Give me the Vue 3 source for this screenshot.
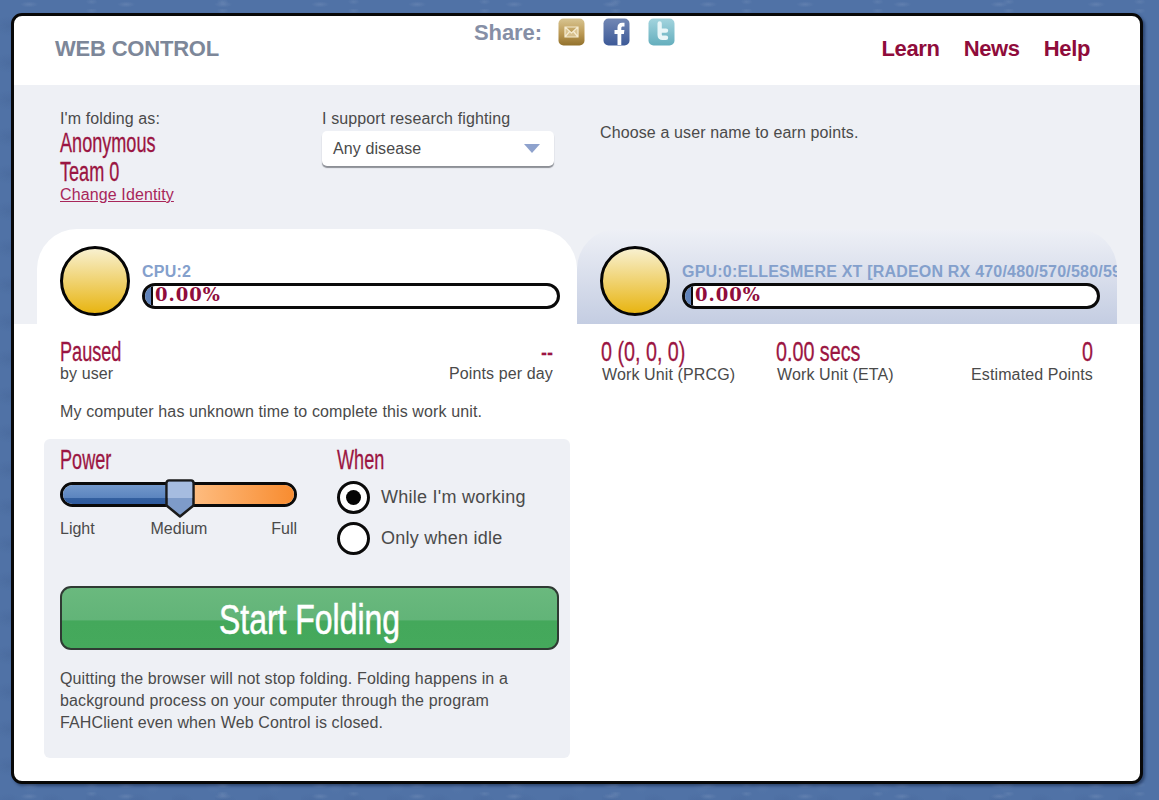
<template>
  <div class="page">
    <main class="card">
      <header class="header">
        <div class="brand">WEB CONTROL</div>
        <div class="share">
          <span class="share-label">Share:</span>
          <svg class="tile t-mail" viewBox="0 0 27 28" width="27" height="28">
            <rect x="0.5" y="0.5" width="26" height="27" rx="5" fill="url(#gold)" />
            <path d="M7 9h13v10H7zM7 9l6.5 6L20 9M7 19l4.500-5.500M20 19l-4.500-5.500" fill="#f1e4c0" fill-opacity=".55" stroke="#f5ebd0" stroke-width="1.2" />
            <defs>
              <linearGradient id="gold" x1="0" y1="0" x2="0" y2="1"><stop offset="0" stop-color="#d8c592" /><stop offset=".55" stop-color="#bc9a55" /><stop offset="1" stop-color="#92712c" /></linearGradient>
              <linearGradient id="fb" x1="0" y1="0" x2="0" y2="1"><stop offset="0" stop-color="#7287b4" /><stop offset="1" stop-color="#3d5a98" /></linearGradient>
              <linearGradient id="tw" x1="0" y1="0" x2="0" y2="1"><stop offset="0" stop-color="#a3d4de" /><stop offset="1" stop-color="#64aebd" /></linearGradient>
            </defs>
          </svg>
          <svg class="tile" viewBox="0 0 27 28" width="27" height="28">
            <rect x="0.5" y="0.5" width="26" height="27" rx="5" fill="url(#fb)" />
            <path d="M14.500 27V16h-3v-4h3V9.500c0-3.200 1.800-4.800 4.600-4.800h2.400v3.800h-1.600c-1.200 0-1.600.6-1.600 1.700V12h3.100l-.5 4h-2.600v11z" fill="#fff" />
          </svg>
          <svg class="tile" viewBox="0 0 27 28" width="27" height="28">
            <rect x="0.5" y="0.5" width="26" height="27" rx="5" fill="url(#tw)" />
            <path d="M9.500 5.500v11.500c0 3.200 2 5 5 5h3.500a2.200 2.200 0 0 0 0-4.400h-3c-.8 0-1.200-.4-1.200-1.200v-1.600H18a2.200 2.200 0 0 0 0-4.400h-4.200V5.500a2.150 2.150 0 0 0-4.300 0z" fill="#e9f6f8" />
          </svg>
        </div>
        <nav class="nav">
          <a>Learn</a>
          <a>News</a>
          <a>Help</a>
        </nav>
      </header>

      <section class="band">
        <div class="identity">
          <div class="who">
            <div class="label">I'm folding as:</div>
            <div class="cond name">Anonymous</div>
            <div class="cond name">Team 0</div>
            <a class="change">Change Identity</a>
          </div>
          <div class="cause">
            <div class="label">I support research fighting</div>
            <div class="select">
              <span>Any disease</span>
              <i class="caret"></i>
            </div>
          </div>
          <div class="hint">Choose a user name to earn points.</div>
        </div>

        <div class="tabs">
          <div v-for="tab in tabs" :key="tab.title" class="tab" :class="{ active: tab.active }">
            <div class="disc"></div>
            <div class="slot">
              <div class="slot-title">{{ tab.title }}</div>
              <div class="progress">
                <div class="fill"></div>
                <span class="pct">0.00%</span>
              </div>
            </div>
          </div>
        </div>
      </section>

      <section class="panes">
        <div class="pane-left">
          <div class="status">
            <div>
              <div class="cond stat">Paused</div>
              <div class="label">by user</div>
            </div>
            <div class="right">
              <div class="cond stat">--</div>
              <div class="label">Points per day</div>
            </div>
          </div>
          <p class="eta">My computer has unknown time to complete this work unit.</p>

          <div class="controls">
            <div class="settings">
              <div class="power">
                <div class="cond heading">Power</div>
                <div class="slider">
                  <div class="track">
                    <div class="track-low"></div>
                    <div class="track-high"></div>
                  </div>
                  <svg class="thumb" viewBox="0 0 32 41" width="32" height="41">
                    <path d="M5 2.500h22a2.500 2.500 0 0 1 2.500 2.500v22.500L16 38.500 2.500 27.500V5A2.500 2.500 0 0 1 5 2.500z" fill="#7e9bc9" stroke="#1a1a1a" stroke-width="2.500" stroke-linejoin="round" />
                    <path d="M5 3.800h22a1.200 1.200 0 0 1 1.200 1.200v15H3.800V5A1.200 1.200 0 0 1 5 3.800z" fill="#a6bce0" />
                  </svg>
                </div>
                <div class="ticks"><span>Light</span><span class="mid">Medium</span><span>Full</span></div>
              </div>
              <div class="when">
                <div class="cond heading">When</div>
                <div class="radio-row first"><span class="radio on"></span><span>While I'm working</span></div>
                <div class="radio-row"><span class="radio"></span><span>Only when idle</span></div>
              </div>
            </div>

            <button class="start"><span class="start-text">Start Folding</span></button>

            <p class="note">Quitting the browser will not stop folding. Folding happens in a<br />background process on your computer through the program<br />FAHClient even when Web Control is closed.</p>
          </div>
        </div>

        <div class="pane-right">
          <div class="wu">
            <div class="cond stat wide">0 (0, 0, 0)</div>
            <div class="label">Work Unit (PRCG)</div>
          </div>
          <div class="wu">
            <div class="cond stat wide">0.00 secs</div>
            <div class="label">Work Unit (ETA)</div>
          </div>
          <div class="wu right">
            <div class="cond stat wide">0</div>
            <div class="label">Estimated Points</div>
          </div>
        </div>
      </section>
    </main>
  </div>
</template>

<script setup>
const tabs = [
  { title: 'CPU:2', active: true },
  { title: 'GPU:0:ELLESMERE XT [RADEON RX 470/480/570/580/590]', active: false }
]
</script>

<style>
html, body { margin: 0; }
</style>

<style scoped>
.page {
  box-sizing: border-box;
  width: 1159px;
  height: 800px;
  padding: 13px 16px 16px 11px;
  overflow: hidden;
  background-color: #5072a6;
  background-image:
    radial-gradient(ellipse 9px 3px at 30% 40%, rgba(140, 162, 198, .28), transparent),
    radial-gradient(ellipse 6px 3px at 70% 20%, rgba(140, 162, 198, .22), transparent),
    radial-gradient(ellipse 10px 14px at 50% 60%, rgba(125, 150, 190, .18), transparent),
    radial-gradient(ellipse 14px 10px at 20% 70%, rgba(60, 90, 140, .22), transparent);
  background-size: 97px 11px, 131px 9px, 61px 47px, 43px 37px;
  font-family: "Liberation Sans", Arial, sans-serif;
  color: #4a4a4a;
}
.card {
  box-sizing: border-box;
  height: 771px;
  display: flex;
  flex-direction: column;
  background: #fff;
  border: 3px solid #080808;
  border-radius: 11px;
  overflow: hidden;
  box-shadow: 2px 2px 3px rgba(10, 25, 60, .5);
}
.header {
  height: 69px;
  flex: none;
  position: relative;
  display: flex;
  align-items: flex-start;
  justify-content: space-between;
  padding: 0 50px 0 41px;
}
.brand {
  margin-top: 20px;
  font-size: 22px;
  line-height: 26px;
  font-weight: 700;
  color: #7d8799;
  letter-spacing: -.2px;
}
.share {
  position: absolute;
  left: 460px;
  top: 2px;
  display: flex;
  align-items: flex-start;
}
.share-label {
  font-size: 22px;
  line-height: 26px;
  margin-top: 2px;
  font-weight: 700;
  color: #868fa6;
  letter-spacing: -.1px;
  width: 84px;
}
.tile { display: block; margin-right: 18px; }
.nav {
  display: flex;
  gap: 24px;
  margin-top: 20px;
  font-size: 22px;
  line-height: 26px;
  font-weight: 700;
  letter-spacing: -.35px;
  color: #8f0c3b;
}
.band {
  height: 239px;
  flex: none;
  background: #eef0f5;
  display: flex;
  flex-direction: column;
  justify-content: space-between;
}
.identity {
  height: 144px;
  position: relative;
  display: flex;
  padding: 24px 0 0 46px;
  box-sizing: border-box;
}
.label {
  font-size: 16px;
  line-height: 20px;
  letter-spacing: .12px;
  color: #4a4a4a;
  white-space: nowrap;
}
.cond {
  font-family: "Liberation Sans", sans-serif;
  color: #9b1542;
  display: block;
  transform-origin: left center;
  transform: scaleX(.67);
  -webkit-text-stroke: .3px #9b1542;
  white-space: nowrap;
}
.cond.wide { transform: scaleX(.73); }
.who { width: 262px; }
.name { font-size: 27px; line-height: 29px; }
.change {
  display: block;
  font-size: 16px;
  line-height: 16px;
  letter-spacing: .12px;
  color: #a8265a;
  text-decoration: underline;
}
.cause { width: 278px; }
.select {
  box-sizing: border-box;
  width: 232px;
  height: 35px;
  margin-top: 2px;
  padding: 0 14px 0 11px;
  display: flex;
  align-items: center;
  justify-content: space-between;
  font-size: 16px;
  letter-spacing: .1px;
  color: #4a4a4a;
  background: #fff;
  border-radius: 5px;
  box-shadow: 0 2px 1px #8c8f96;
}
.caret {
  width: 0;
  height: 0;
  border-left: 8px solid transparent;
  border-right: 8px solid transparent;
  border-top: 9px solid #8ea2cd;
}
.hint { font-size: 16px; line-height: 20px; letter-spacing: .12px; margin-top: 14px; white-space: nowrap; }
.tabs {
  display: flex;
  height: 95px;
  padding-left: 23px;
}
.tab {
  box-sizing: border-box;
  width: 540px;
  padding: 17px 17px 0 23px;
  display: flex;
  border-radius: 40px 40px 0 0;
  background: linear-gradient(#eef0f6, #c4cde2);
  overflow: hidden;
}
.tab.active { background: #fff; }
.disc {
  box-sizing: border-box;
  flex: none;
  width: 70px;
  height: 70px;
  border: 3px solid #050505;
  border-radius: 50%;
  background: linear-gradient(#f8f0cf, #e8b512);
}
.slot { margin-left: 12px; flex: none; width: 418px; margin-top: 16px; }
.slot-title {
  width: 436px;
  font-size: 16px;
  line-height: 19px;
  font-weight: 700;
  letter-spacing: .2px;
  color: #84a0cc;
  white-space: nowrap;
  overflow: hidden;
}
.progress {
  box-sizing: border-box;
  position: relative;
  height: 26px;
  margin-top: 2px;
  border: 3px solid #0a0a0a;
  border-radius: 13px;
  background: #fff;
  overflow: hidden;
}
.fill {
  position: absolute;
  left: 0;
  top: 0;
  bottom: 0;
  width: 6px;
  background: #5f82ba;
  border-right: 2px solid #0a0a0a;
}
.pct {
  position: absolute;
  left: 10px;
  top: -3px;
  font-family: "DejaVu Serif", serif;
  font-weight: 700;
  font-size: 18px;
  line-height: 24px;
  letter-spacing: 1px;
  color: #8f0c3b;
}
.panes {
  flex: 1;
  display: flex;
  padding-left: 23px;
}
.pane-left { width: 540px; flex: none; box-sizing: border-box; padding: 15px 23px 0 7px; }
.status {
  display: flex;
  justify-content: space-between;
  padding: 0 1px 0 16px;
}
.stat { font-size: 27px; line-height: 26px; }
.right { text-align: right; }
.right .cond { transform-origin: right center; }
.status .label { margin-top: -1px; }
.eta { margin: 18px 0 0 16px; font-size: 16px; line-height: 20px; letter-spacing: .12px; }
.controls {
  box-sizing: border-box;
  width: 526px;
  height: 319px;
  margin-top: 17px;
  padding: 6px 12px 0 16px;
  background: #eef0f5;
  border-radius: 6px;
}
.settings { display: flex; height: 141px; }
.power { width: 237px; margin-right: 40px; flex: none; }
.heading { font-size: 27px; line-height: 30px; }
.slider { position: relative; height: 36px; padding-top: 7px; box-sizing: border-box; }
.track {
  box-sizing: border-box;
  height: 25px;
  display: flex;
  border: 3px solid #0a0a0a;
  border-radius: 13px;
  overflow: hidden;
}
.track-low { width: 110px; background: linear-gradient(#7298cb 0, #5c85bf 66%, #34609f 66%, #2e5a9f 100%); }
.track-high { flex: 1; background: linear-gradient(90deg, #ffc690, #f88c30); }
.thumb { position: absolute; left: 104px; top: 3px; }
.ticks {
  display: flex;
  justify-content: space-between;
  margin-top: 8px;
  font-size: 16px;
  line-height: 20px;
}
.mid { margin-right: 8px; }
.when { flex: none; }
.radio-row {
  display: flex;
  align-items: center;
  gap: 11px;
  height: 33px;
  margin-bottom: 8px;
  font-size: 18px;
  letter-spacing: .25px;
  white-space: nowrap;
}
.radio-row.first { margin-top: 6px; }
.radio {
  box-sizing: border-box;
  width: 33px;
  height: 33px;
  border: 3px solid #0a0a0a;
  border-radius: 50%;
  background: #fff;
  position: relative;
}
.radio.on::after {
  content: "";
  position: absolute;
  left: 6px;
  top: 6px;
  width: 15px;
  height: 15px;
  border-radius: 50%;
  background: #050505;
}
.start {
  box-sizing: border-box;
  display: block;
  width: 499px;
  height: 64px;
  padding: 3px 0 0;
  border: 2px solid #2f3a33;
  border-radius: 11px;
  background: linear-gradient(#6ab97e 0, #62b478 53%, #44a85b 55%, #45a95c 100%);
  cursor: pointer;
}
.start-text {
  display: block;
  font-family: "Liberation Sans", sans-serif;
  font-size: 42px;
  line-height: 57px;
  color: #fff;
  -webkit-text-stroke: .6px #fff;
  transform: scaleX(.76);
}
.note { margin: 18px 0 0; font-size: 16px; line-height: 22px; letter-spacing: .12px; white-space: nowrap; }
.pane-right {
  flex: 1;
  display: grid;
  grid-template-columns: 175px 1fr auto;
  align-items: start;
  padding: 15px 47px 0 24px;
}
.wu .label { padding-left: 1px; }
</style>
